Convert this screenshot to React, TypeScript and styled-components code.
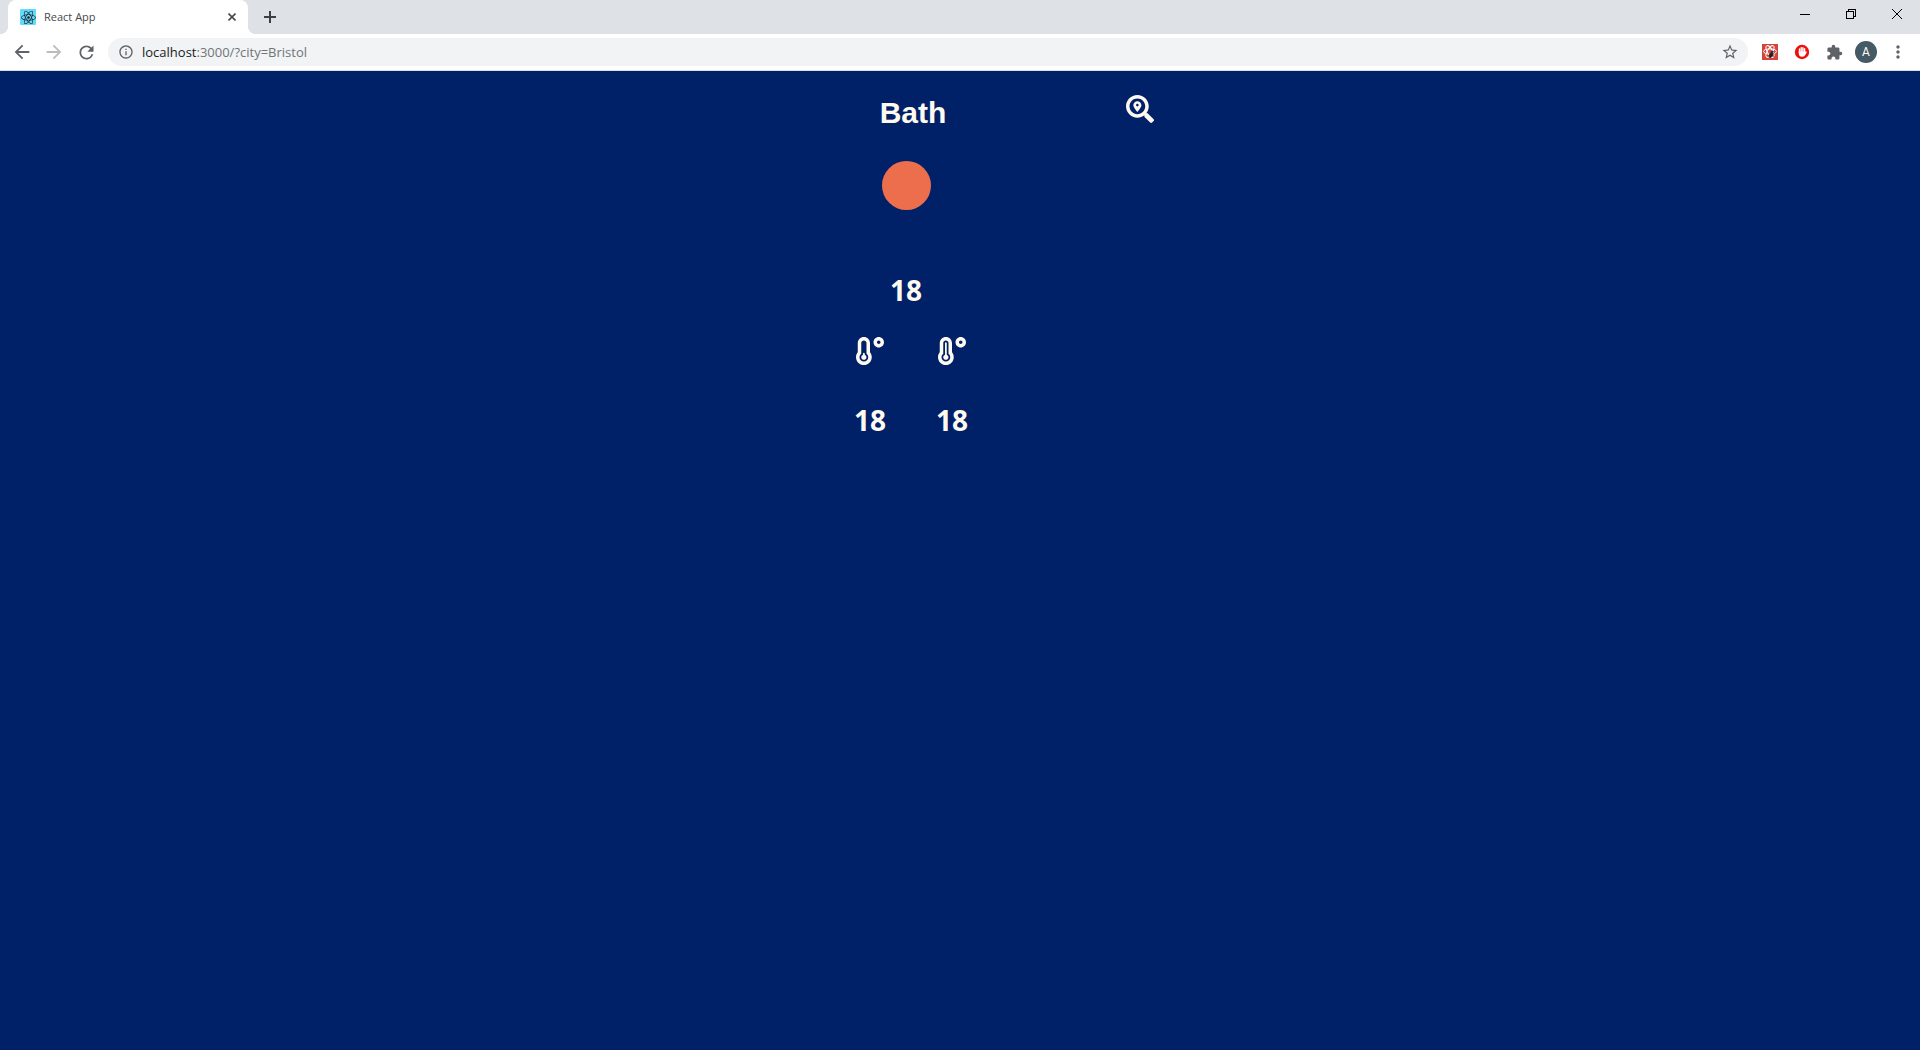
import React from "react";
import styled, { createGlobalStyle } from "styled-components";
import { FaReact, FaSearchLocation, FaTemperatureHigh, FaTemperatureLow } from "react-icons/fa";
import {
  MdArrowBack,
  MdArrowForward,
  MdExtension,
  MdInfoOutline,
  MdMoreVert,
  MdRefresh,
  MdStarBorder,
} from "react-icons/md";

const uiFont = `"Open Sans", "Noto Sans", sans-serif`;

const GlobalStyle = createGlobalStyle`
  *, *::before, *::after { box-sizing: border-box; }
  html { background: #002068; }
  body { margin: 0; font-family: ${uiFont}; }
  h1, p { margin: 0; }
  button { padding: 0; border: 0; background: none; color: inherit; font: inherit; }
  svg { display: block; }
`;

const Screen = styled.div`
  display: flex;
  flex-direction: column;
  min-height: 100vh;
`;

const TabStrip = styled.header`
  display: flex;
  align-items: flex-end;
  height: 34px;
  padding-left: 8px;
  background: #dee1e6;
`;

const Tab = styled.div`
  position: relative;
  display: flex;
  align-items: center;
  width: 240px;
  height: 34px;
  padding: 0 10px 0 12px;
  border-radius: 8px 8px 0 0;
  background: #fff;
  color: #45494d;

  &::before,
  &::after {
    content: "";
    position: absolute;
    bottom: 0;
    width: 8px;
    height: 8px;
  }
  &::before {
    right: 100%;
    background: radial-gradient(circle at 0 0, #dee1e6 8px, #fff 8px);
  }
  &::after {
    left: 100%;
    background: radial-gradient(circle at 100% 0, #dee1e6 8px, #fff 8px);
  }
`;

const Favicon = styled.span`
  display: grid;
  place-items: center;
  width: 16px;
  height: 16px;
  margin-right: 8px;
  border-radius: 1px;
  background: #61dafb;
  color: #20232a;
`;

const TabTitle = styled.span`
  flex: 1;
  font-size: 11px;
  line-height: 16px;
`;

const IconButton = styled.button<{ $size: number; $color?: string }>`
  display: grid;
  flex: none;
  place-items: center;
  width: ${(p) => p.$size}px;
  height: ${(p) => p.$size}px;
  color: ${(p) => p.$color ?? "#5f6368"};
`;

const NewTab = styled(IconButton)`
  margin: 0 0 3px 8px;
`;

const WindowControls = styled.div`
  display: flex;
  align-self: flex-start;
  margin-left: auto;
`;

const WindowButton = styled.button`
  display: grid;
  place-items: center;
  width: 46px;
  height: 28px;
  color: #000;
`;

const Toolbar = styled.nav`
  display: flex;
  align-items: center;
  height: 37px;
  padding: 0 6px;
  border-bottom: 1px solid #dadce0;
  background: #fff;
`;

const AddressBar = styled.div`
  display: flex;
  flex: 1;
  align-items: center;
  height: 28px;
  margin: 0 6px;
  padding: 0 8px 0 10px;
  border-radius: 14px;
  background: #f1f3f4;
  color: #5f6368;
`;

const Address = styled.p`
  flex: 1;
  padding-left: 8px;
  color: #70757a;
  font-size: 13px;
  line-height: 20px;
`;

const Host = styled.span`
  color: #202124;
`;

const Extensions = styled.div`
  display: flex;
  align-items: center;
`;

const Avatar = styled.span`
  display: grid;
  place-items: center;
  width: 22px;
  height: 22px;
  border-radius: 50%;
  background: #455a64;
  color: #fff;
  font-family: Roboto, sans-serif;
  font-size: 12px;
`;

const Page = styled.main`
  flex: 1;
  padding-top: 24px;
  background: #002068;
  color: #fffaf0;
`;

const Forecast = styled.div`
  display: grid;
  grid-template-columns: 294px 94px;
  justify-content: center;
`;

const Weather = styled.section`
  display: flex;
  flex-direction: column;
  align-items: center;
`;

const City = styled.h1`
  font-family: "Liberation Sans", Arial, sans-serif;
  font-size: 30px;
  line-height: 36px;
`;

const Now = styled.div`
  display: flex;
  flex-direction: column;
  align-items: center;
  gap: 61px;
  padding: 30px 14px 0 0;
`;

const Sun = styled.div`
  width: 49px;
  height: 49px;
  border-radius: 50%;
  background: #ec6e4c;
`;

const Degrees = styled.p`
  font-size: 28px;
  font-weight: 700;
  line-height: 38px;
`;

const Range = styled.div`
  display: flex;
  gap: 50px;
  padding: 28px 4px 0 0;
`;

const Reading = styled.div`
  display: flex;
  flex-direction: column;
  align-items: center;
  gap: 36px;
`;

const Search = styled(IconButton)`
  justify-self: end;
`;

function MinimizeIcon() {
  return (
    <svg width="10" height="10" fill="none" stroke="currentColor" shapeRendering="crispEdges">
      <path d="M0 5.5h10" />
    </svg>
  );
}

function RestoreIcon() {
  return (
    <svg width="10" height="10" fill="none" stroke="currentColor" shapeRendering="crispEdges">
      <path d="M.5 2.5h7v7h-7zM2.5 2.5v-2h7v7h-2" />
    </svg>
  );
}

function CloseIcon() {
  return (
    <svg width="10" height="10" fill="none" stroke="currentColor">
      <path d="M0 0l10 10M10 0L0 10" />
    </svg>
  );
}

function TabCloseIcon() {
  return (
    <svg width="8" height="8" fill="none" stroke="currentColor" strokeWidth="1.6">
      <path d="M.5.5l7 7M7.5.5l-7 7" />
    </svg>
  );
}

function PlusIcon() {
  return (
    <svg width="12" height="12" fill="none" stroke="currentColor" strokeWidth="2">
      <path d="M6 0v12M0 6h12" />
    </svg>
  );
}

function ReactSightIcon() {
  return (
    <svg width="16" height="16" viewBox="0 0 16 16">
      <rect width="16" height="16" fill="#d3453b" />
      <g fill="none" stroke="#fff" strokeWidth="1">
        <ellipse cx="8" cy="7.5" rx="6.5" ry="2.6" />
        <ellipse cx="8" cy="7.5" rx="6.5" ry="2.6" transform="rotate(60 8 7.5)" />
        <ellipse cx="8" cy="7.5" rx="6.5" ry="2.6" transform="rotate(120 8 7.5)" />
      </g>
      <g fill="#20201f" stroke="#20201f" strokeWidth=".6">
        <ellipse cx="9" cy="11" rx="1.6" ry="2.6" transform="rotate(30 9 11)" />
        <circle cx="10.4" cy="7.8" r=".9" />
        <path d="M6.8 9.6l5.6 3M6.6 12.4l5.8-3.4" />
      </g>
    </svg>
  );
}

function BlockerIcon() {
  return (
    <svg width="16" height="16" viewBox="0 0 16 16">
      <circle cx="8" cy="8" r="7.2" fill="#f00f0f" />
      <g fill="none" stroke="#fff" strokeLinecap="round" strokeWidth="1.4">
        <path d="M5.5 9V5M7.2 8V3.8M8.9 8V3.8M10.6 9V4.8M10.6 10.6l1.5-2.4" />
      </g>
      <path d="M4.8 7.5h6.5v2.3c0 1.8-1.2 3-3.2 3s-3.3-1.2-3.3-3z" fill="#fff" />
    </svg>
  );
}

export default function App() {
  return (
    <Screen>
      <GlobalStyle />
      <TabStrip>
        <Tab>
          <Favicon>
            <FaReact size={15} />
          </Favicon>
          <TabTitle>React App</TabTitle>
          <IconButton $size={12} $color="#45494d" aria-label="Close tab">
            <TabCloseIcon />
          </IconButton>
        </Tab>
        <NewTab $size={28} $color="#3c4043" aria-label="New tab">
          <PlusIcon />
        </NewTab>
        <WindowControls>
          <WindowButton aria-label="Minimize"><MinimizeIcon /></WindowButton>
          <WindowButton aria-label="Restore"><RestoreIcon /></WindowButton>
          <WindowButton aria-label="Close"><CloseIcon /></WindowButton>
        </WindowControls>
      </TabStrip>
      <Toolbar>
        <IconButton $size={32} aria-label="Back"><MdArrowBack size={22} /></IconButton>
        <IconButton $size={32} $color="#babcbe" aria-label="Forward"><MdArrowForward size={22} /></IconButton>
        <IconButton $size={32} aria-label="Reload"><MdRefresh size={21} /></IconButton>
        <AddressBar>
          <MdInfoOutline size={16} />
          <Address><Host>localhost</Host>:3000/?city=Bristol</Address>
          <IconButton $size={20} aria-label="Bookmark"><MdStarBorder size={18} /></IconButton>
        </AddressBar>
        <Extensions>
          <IconButton $size={32} aria-label="React inspector"><ReactSightIcon /></IconButton>
          <IconButton $size={32} aria-label="Content blocker"><BlockerIcon /></IconButton>
          <IconButton $size={32} aria-label="Extensions"><MdExtension size={17} /></IconButton>
          <IconButton $size={32} aria-label="Profile"><Avatar>A</Avatar></IconButton>
          <IconButton $size={32} aria-label="Menu"><MdMoreVert size={20} /></IconButton>
        </Extensions>
      </Toolbar>
      <Page>
        <Forecast>
          <Weather>
            <City>Bath</City>
            <Now>
              <Sun />
              <Degrees>18</Degrees>
            </Now>
            <Range>
              <Reading>
                <FaTemperatureLow size={28} />
                <Degrees>18</Degrees>
              </Reading>
              <Reading>
                <FaTemperatureHigh size={28} />
                <Degrees>18</Degrees>
              </Reading>
            </Range>
          </Weather>
          <Search $size={28} $color="#fffaf0" aria-label="Search location">
            <FaSearchLocation size={28} />
          </Search>
        </Forecast>
      </Page>
    </Screen>
  );
}
